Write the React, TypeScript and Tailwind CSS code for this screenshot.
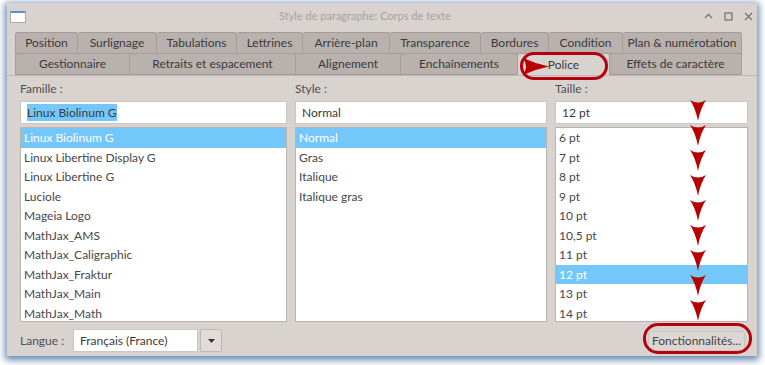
import React from 'react';

const row1 = [
  ['Position', 63],
  ['Surlignage', 79],
  ['Tabulations', 80],
  ['Lettrines', 66],
  ['Arrière-plan', 87],
  ['Transparence', 91],
  ['Bordures', 68],
  ['Condition', 74],
  ['Plan & numérotation', 119],
] as const;

const row2 = [
  ['Gestionnaire', 115],
  ['Retraits et espacement', 166],
  ['Alignement', 105],
  ['Enchaînements', 117],
  ['Police', 92],
  ['Effets de caractère', 132],
] as const;

const families = [
  'Linux Biolinum G',
  'Linux Libertine Display G',
  'Linux Libertine G',
  'Luciole',
  'Mageia Logo',
  'MathJax_AMS',
  'MathJax_Caligraphic',
  'MathJax_Fraktur',
  'MathJax_Main',
  'MathJax_Math',
];

const styles = ['Normal', 'Gras', 'Italique', 'Italique gras'];

const sizes = ['6 pt', '7 pt', '8 pt', '9 pt', '10 pt', '10,5 pt', '11 pt', '12 pt', '13 pt', '14 pt'];

function Tab({ label, width, active }: { label: string; width: number; active?: boolean }) {
  return (
    <div
      style={{ width }}
      className={
        'h-full flex items-center justify-center border-y border-r first:border-l border-[#a39c99] rounded-t-[2px] text-[12px] text-[#3a3a3a] ' +
        (active ? 'bg-[#d9d3d0] border-b-0' : 'bg-[#b8b1ae]')
      }
    >
      {label}
    </div>
  );
}

function ListBox({ items, selected }: { items: string[]; selected: number }) {
  return (
    <div className="mt-[3px] h-[195px] bg-white border border-[#b9b3b0] overflow-hidden">
      {items.map((it, i) => (
        <div
          key={it}
          className={
            'h-[19.5px] leading-[19.5px] pl-[3px] text-[12px] ' +
            (i === selected ? 'bg-[#74c7fb] text-white' : 'text-[#474747]')
          }
        >
          {it}
        </div>
      ))}
    </div>
  );
}

function DownArrow({ top }: { top: number }) {
  return (
    <svg className="absolute left-[683px]" style={{ top }} width="16" height="21" viewBox="0 0 16 21">
      <path d="M0 0 Q8 5 16 0 Q10.5 8 8 21 Q5.5 8 0 0Z" fill="#b80000" />
    </svg>
  );
}

export default function App() {
  return (
    <div className="w-[765px] h-[365px] bg-white relative overflow-hidden" style={{ fontFamily: 'Lato, "Noto Sans", sans-serif' }}>
      <div className="absolute left-[7px] top-[3px] w-[750px] h-[353px] bg-[#d9d3d0] shadow-[0_2px_7px_2px_rgba(50,95,150,0.75)] flex flex-col">
        {/* title bar */}
        <div className="h-[26px] flex items-center px-[3px] relative shrink-0">
          <div className="w-[16px] h-[12px] bg-white border border-[#b0aaa7] border-t-[2px] border-t-[#5d8fd0] mt-[1px]" />
          <div className="flex-1 text-center text-[11px] text-[#a7a19e]">Style de paragraphe: Corps de texte</div>
          <div className="flex items-center gap-[11px] pr-[1px] text-[#7a7573]">
            <svg width="9" height="9" viewBox="0 0 9 9"><path d="M1 6 L4.5 2.5 L8 6" fill="none" stroke="currentColor" strokeWidth="1.3" /></svg>
            <svg width="9" height="9" viewBox="0 0 9 9"><rect x="1" y="1" width="7" height="7" fill="none" stroke="currentColor" strokeWidth="1.3" /></svg>
            <svg width="9" height="9" viewBox="0 0 9 9"><path d="M1 1 L8 8 M8 1 L1 8" fill="none" stroke="currentColor" strokeWidth="1.3" /></svg>
          </div>
        </div>

        {/* tabs */}
        <div className="pl-[8px] mt-[3px] shrink-0">
          <div className="flex h-[22px]">
            {row1.map(([l, w]) => (
              <Tab key={l} label={l} width={w} />
            ))}
          </div>
          <div className="flex h-[22px] -mt-px">
            {row2.map(([l, w]) => (
              <Tab key={l} label={l} width={w} active={l === 'Police'} />
            ))}
          </div>
        </div>

        {/* panel */}
        <div className="flex-1 border-t border-[#bdb7b4] pl-[13px] pr-[2px] pt-[5px]">
          <div className="flex gap-[8px]">
            <div className="w-[267px] shrink-0">
              <div className="h-[16px] leading-[16px] text-[12px] text-[#505050]">Famille :</div>
              <div className="mt-[4px] h-[23px] bg-white border border-[#cdc7c4] flex items-center pl-[6px] text-[12px] text-[#3a3a3a]">
                <span className="bg-[#74c7fb] leading-[17px]">Linux Biolinum G</span>
              </div>
              <ListBox items={families} selected={0} />
            </div>
            <div className="w-[252px] shrink-0">
              <div className="h-[16px] leading-[16px] text-[12px] text-[#505050]">Style :</div>
              <div className="mt-[4px] h-[23px] bg-white border border-[#cdc7c4] flex items-center pl-[6px] text-[12px] text-[#3a3a3a]">Normal</div>
              <ListBox items={styles} selected={0} />
            </div>
            <div className="w-[193px] shrink-0">
              <div className="h-[16px] leading-[16px] text-[12px] text-[#505050]">Taille :</div>
              <div className="mt-[4px] h-[23px] bg-white border border-[#cdc7c4] flex items-center pl-[6px] text-[12px] text-[#3a3a3a]">12 pt</div>
              <ListBox items={sizes} selected={7} />
            </div>
          </div>

          <div className="mt-[7px] h-[23px] flex items-center">
            <div className="w-[53px] text-[12px] text-[#505050]">Langue :</div>
            <div className="w-[125px] h-[23px] bg-white border border-[#cdc7c4] flex items-center pl-[6px] text-[12px] text-[#3a3a3a]">Français (France)</div>
            <div className="ml-[2px] w-[22px] h-[23px] bg-[#e1dcd9] border border-[#bfb9b6] rounded-[2px] flex items-center justify-center">
              <svg width="7" height="4" viewBox="0 0 7 4"><path d="M0 0 H7 L3.5 4Z" fill="#333" /></svg>
            </div>
            <div className="flex-1" />
            <div className="mr-[10px] w-[97px] h-[20px] bg-[#dcd7d4] border border-[#cbc5c2] rounded-[3px] flex items-center justify-center text-[12px] text-[#444]">
              Fonctionnalités...
            </div>
          </div>
        </div>

        {/* annotations */}
        <div className="absolute left-[513px] top-[49px] w-[88px] h-[28px] rounded-[14px] border-[3px] border-[#b5000d]" />
        <svg className="absolute left-[516px] top-[55px]" width="26" height="17" viewBox="0 0 26 17">
          <path d="M0 0 Q13 6 26 8.5 Q13 11 0 17 Q6 8.5 0 0Z" fill="#b80000" />
        </svg>
        <div className="absolute left-[636px] top-[320px] w-[109px] h-[31px] rounded-[15px] border-[3px] border-[#b5000d]" />
        {[97, 122, 147, 172, 197, 222, 247, 272, 297].map((t) => (
          <DownArrow key={t} top={t} />
        ))}
      </div>
    </div>
  );
}
